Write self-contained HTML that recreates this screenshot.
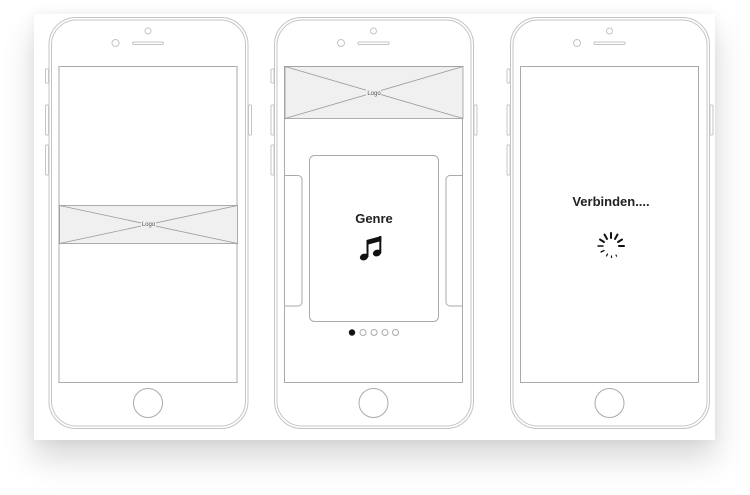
<!DOCTYPE html>
<html><head><style>
html,body{margin:0;padding:0;background:#fff;}
body{width:750px;height:495px;position:relative;overflow:hidden;font-family:"Liberation Sans",sans-serif;}
.card{position:absolute;left:34px;top:14px;width:681px;height:426px;background:#fff;box-shadow:0 18px 30px rgba(0,0,0,0.16),0 0 10px rgba(0,0,0,0.05);}
svg{position:absolute;left:0;top:0;}
</style></head><body>
<div class="card"></div>
<svg width="750" height="495" viewBox="0 0 750 495">
<defs>
<g id="phone" fill="none" stroke="#c4c4c4" stroke-width="1">
  <rect x="0.5" y="0.5" width="199" height="411" rx="27"/>
  <rect x="3" y="3" width="194" height="406" rx="25"/>
  <rect x="-3" y="52" width="3" height="14" rx="1"/>
  <rect x="-3" y="88" width="3" height="30" rx="1"/>
  <rect x="-3" y="128" width="3" height="30" rx="1"/>
  <rect x="200" y="88" width="3" height="30" rx="1"/>
  <circle cx="99.5" cy="14" r="3"/>
  <circle cx="67" cy="26" r="3.5"/>
  <rect x="84" y="25" width="31" height="2.5" rx="1.2"/>
  <rect x="10.5" y="49.5" width="178" height="316" stroke="#aaa"/>
  <circle cx="99.5" cy="386" r="14.5" stroke="#aaa"/>
</g>
</defs>
<use href="#phone" x="48.5" y="17"/>
<use href="#phone" x="274" y="17"/>
<use href="#phone" x="510" y="17"/>

<!-- phone1 logo band -->
<g stroke="#999" stroke-width="0.8">
<rect x="59.5" y="205.5" width="178" height="38" fill="#f0f0f0"/>
<line x1="59.5" y1="205.5" x2="237.5" y2="243.5"/>
<line x1="59.5" y1="243.5" x2="237.5" y2="205.5"/>
<rect x="285" y="66.5" width="178" height="52" fill="#f0f0f0"/>
<line x1="285" y1="66.5" x2="463" y2="118.5"/>
<line x1="285" y1="118.5" x2="463" y2="66.5"/>
</g>
<rect x="141" y="220" width="15" height="7" fill="#f0f0f0"/>
<text x="148.5" y="226" font-size="6" fill="#555" text-anchor="middle" font-family="Liberation Sans">Logo</text>
<rect x="366" y="89" width="15" height="7" fill="#f0f0f0"/>
<text x="374" y="95" font-size="6" fill="#555" text-anchor="middle" font-family="Liberation Sans">Logo</text>

<!-- phone2 cards -->
<g fill="none" stroke="#aaa" stroke-width="1">
<rect x="309.5" y="155.5" width="129" height="166" rx="5"/>
<path d="M285 175.5 H298 a4 4 0 0 1 4 4 V302 a4 4 0 0 1 -4 4 H285"/>
<path d="M463 175.5 H450 a4 4 0 0 0 -4 4 V302 a4 4 0 0 0 4 4 H463"/>
<circle cx="363" cy="332.5" r="3"/>
<circle cx="374" cy="332.5" r="3"/>
<circle cx="385" cy="332.5" r="3"/>
<circle cx="395.5" cy="332.5" r="3"/>
</g>
<circle cx="352" cy="332.5" r="3.2" fill="#111"/>
<text x="374" y="223" font-size="13" font-weight="bold" fill="#222" text-anchor="middle">Genre</text>
<g fill="#111">
<ellipse cx="364" cy="257" rx="4.2" ry="3.3" transform="rotate(-20 364 257)"/>
<ellipse cx="377" cy="253" rx="4.2" ry="3.3" transform="rotate(-20 377 253)"/>
<rect x="366.5" y="240" width="2" height="17"/>
<rect x="379.3" y="236" width="2" height="17"/>
<path d="M366.5 240 L381.3 236 L381.3 241 L366.5 245 Z"/>
</g>

<!-- phone3 -->
<text x="611" y="206" font-size="13" font-weight="bold" fill="#222" text-anchor="middle">Verbinden....</text>
<g stroke="#111" stroke-width="2" stroke-linecap="round">
<line x1="611" y1="238" x2="611" y2="233"/>
<line x1="615" y1="239" x2="617.5" y2="234.5"/>
<line x1="618" y1="242" x2="622" y2="239.5"/>
<line x1="619" y1="246" x2="624" y2="246"/>
<line x1="607" y1="239" x2="604.5" y2="234.5"/>
<line x1="604" y1="242" x2="600" y2="239.5"/>
<line x1="603" y1="246" x2="598" y2="246" stroke-width="1.5"/>
<line x1="604" y1="250.5" x2="601" y2="252" stroke-width="1.3"/>
<line x1="607.5" y1="254" x2="606.5" y2="256" stroke-width="1.2"/>
<line x1="611.5" y1="256" x2="611.5" y2="257.5" stroke-width="1.2"/>
<line x1="616" y1="255" x2="616.6" y2="256.2" stroke-width="1.1"/>
</g>
</svg>
</body></html>
